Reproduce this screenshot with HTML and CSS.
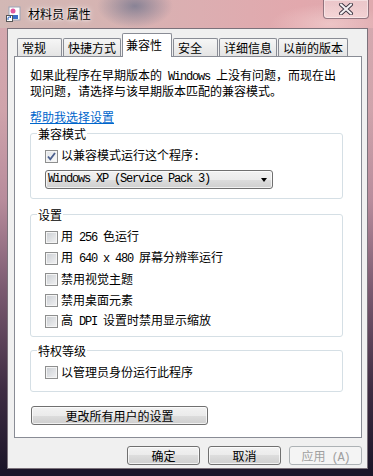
FILE: index.html
```html
<!DOCTYPE html>
<html lang="zh-CN">
<head>
  <meta charset="UTF-8">
  <meta name="viewport" content="width=device-width, initial-scale=1.0">
  <title>材料员 属性</title>
  <link rel="stylesheet" href="styles.css">
</head>
<body>
  <div class="window">
    <div class="titlebar">
      <svg class="app-icon" width="16" height="16" viewBox="0 0 16 16">
        <rect x="3" y="1" width="11" height="13" fill="#fff" stroke="#9aa3b5"/>
        <circle cx="7" cy="5" r="2.5" fill="#e05aa0"/>
        <path d="M6 9 h6 v4 h-6 z" fill="#3a6fc8"/>
        <rect x="0.5" y="9.5" width="6" height="6" fill="#fff" stroke="#555"/>
        <path d="M2 14 L2 12 Q2 11 3.5 11 L5 11 M4 10 L5 11 L4 12" fill="none" stroke="#1f5bc0" stroke-width="1"/>
      </svg>
      <span class="title">材料员 属性</span>
      <div class="close-btn">
        <svg width="16" height="12" viewBox="0 0 16 12">
          <path d="M3 1.5 L13 10.5 M13 1.5 L3 10.5" stroke="#3b3440" stroke-width="4" stroke-linecap="round"/>
          <path d="M3 1.5 L13 10.5 M13 1.5 L3 10.5" stroke="#f4f0f2" stroke-width="2.2" stroke-linecap="round"/>
        </svg>
      </div>
    </div>

    <div class="client">
      <div class="tabs">
        <div class="tab">常规</div>
        <div class="tab">快捷方式</div>
        <div class="tab active">兼容性</div>
        <div class="tab">安全</div>
        <div class="tab">详细信息</div>
        <div class="tab">以前的版本</div>
      </div>

      <div class="panel">
        <p class="intro">如果此程序在早期版本的<span class="sbc"> Windows </span>上没有问题，而现在出<br>现问题，请选择与该早期版本匹配的兼容模式。</p>
        <a class="help-link" href="#">帮助我选择设置</a>

        <fieldset class="group group-compat">
          <legend>兼容模式</legend>
          <label class="check-row">
            <span class="checkbox checked">
              <svg width="11" height="11" viewBox="0 0 11 11"><path d="M2 5.5 L4.3 8.3 L9 2" fill="none" stroke="#4b5f8e" stroke-width="1.8"/></svg>
            </span>
            <span class="check-text">以兼容模式运行这个程序<span class="sbc">:</span></span>
          </label>
          <div class="combo">
            <span class="sbc">Windows XP (Service Pack 3)</span>
            <span class="combo-arrow"></span>
          </div>
        </fieldset>

        <fieldset class="group group-settings">
          <legend>设置</legend>
          <label class="check-row"><span class="checkbox"></span><span class="check-text">用<span class="sbc"> 256 </span>色运行</span></label>
          <label class="check-row"><span class="checkbox"></span><span class="check-text">用<span class="sbc"> 640 x 480 </span>屏幕分辨率运行</span></label>
          <label class="check-row"><span class="checkbox"></span><span class="check-text">禁用视觉主题</span></label>
          <label class="check-row"><span class="checkbox"></span><span class="check-text">禁用桌面元素</span></label>
          <label class="check-row"><span class="checkbox"></span><span class="check-text">高<span class="sbc"> DPI </span>设置时禁用显示缩放</span></label>
        </fieldset>

        <fieldset class="group group-privilege">
          <legend>特权等级</legend>
          <label class="check-row"><span class="checkbox"></span><span class="check-text">以管理员身份运行此程序</span></label>
        </fieldset>

        <button class="btn btn-all-users">更改所有用户的设置</button>
      </div>

      <div class="actions">
        <button class="btn">确定</button>
        <button class="btn">取消</button>
        <button class="btn disabled">应用<span class="sbc"> (A)</span></button>
      </div>
    </div>
  </div>
</body>
</html>
```

FILE: styles.css
```css
body {
  margin: 0;
  font-family: "Noto Sans CJK SC", "Liberation Sans", sans-serif;
  font-size: 12px;
  color: #000;
  background: #1b1528;
}

.window {
  width: 373px;
  height: 476px;
  box-sizing: border-box;
  padding-bottom: 7px;
  background: linear-gradient(to bottom, #d6aab0 0, #cfa3ab 110px, #b88c9c 200px, #7a5a70 290px, #3e2c42 390px, #1c1629 470px);
  overflow: hidden;
}

/* title bar (aero glass) */
.titlebar {
  height: 28px;
  display: flex;
  align-items: center;
  padding-left: 6px;
  background:
    radial-gradient(ellipse 38px 22px at 135px 6px, rgba(110, 115, 140, 0.75), rgba(110, 115, 140, 0) 100%),
    radial-gradient(ellipse 60px 20px at 330px 24px, rgba(245, 215, 215, 0.6), rgba(245, 215, 215, 0) 100%),
    linear-gradient(90deg, #d2b8b5 0, #d5b4b2 90px, #dcaeb1 200px, #e2a8ad 300px, #dfa9ae 373px);
}

.app-icon {
  flex: none;
}

.title {
  margin-left: 6px;
  line-height: 16px;
  text-shadow: 0 0 6px #fff, 0 0 3px #fff;
}

.close-btn {
  align-self: flex-start;
  margin-left: auto;
  margin-right: 4px;
  width: 46px;
  height: 19px;
  box-sizing: border-box;
  border: 1px solid rgba(70, 45, 60, 0.55);
  border-top: none;
  border-radius: 0 0 4px 4px;
  background: linear-gradient(to bottom, rgba(255, 255, 255, 0.35), rgba(255, 235, 235, 0.55));
  box-shadow: inset 0 0 0 1px rgba(255, 255, 255, 0.4);
  display: flex;
  align-items: center;
  justify-content: center;
}

/* dialog client area */
.client {
  height: 441px;
  box-sizing: border-box;
  margin: 0 5px 0 7px;
  border: 1px solid rgba(45, 30, 45, 0.6);
  background: #f0f0f0;
  padding: 4px 5px 3px 6px;
}

.tabs {
  height: 23px;
  display: flex;
  align-items: flex-end;
  gap: 1px;
  padding-left: 3px;
}

.tab {
  min-width: 45px;
  height: 18px;
  box-sizing: border-box;
  padding: 0 4px;
  border: 1px solid #898c95;
  border-bottom: none;
  border-radius: 2px 2px 0 0;
  background: linear-gradient(to bottom, #f6f6f6, #e4e4e4);
  line-height: 17px;
  white-space: nowrap;
}

.tab.active {
  width: 50px;
  height: 24px;
  padding-left: 3px;
  margin-bottom: -1px;
  background: #fff;
  line-height: 21px;
  position: relative;
  z-index: 1;
}

.panel {
  height: 382px;
  box-sizing: border-box;
  border: 1px solid #898c95;
  background: #fff;
  padding: 11px 18px 0 15px;
}

.intro {
  margin: 0;
  line-height: 13px;
}

.sbc {
  font-family: "Liberation Mono", monospace;
  font-size: 12px;
  letter-spacing: -1.2px;
}

.help-link {
  display: block;
  width: max-content;
  margin-top: 13px;
  line-height: 13px;
  color: #0066cc;
  text-decoration: underline;
}

/* group boxes */
.group {
  margin: 0;
  border: 1px solid #d5dfe5;
  border-radius: 3px;
  padding: 8px 10px 9px 6px;
  min-width: 0;
}

.group legend {
  padding: 0 1px;
  line-height: 13px;
}

.group-compat {
  margin-top: 4px;
}

.group-settings {
  margin-top: 9px;
  padding-bottom: 7px;
  display: flex;
  flex-direction: column;
  gap: 5px;
}

.group-privilege {
  margin-top: 7px;
  padding-top: 7px;
  padding-bottom: 11px;
}

.check-row {
  display: flex;
  align-items: center;
  height: 16px;
  margin-left: 8px;
  gap: 3px;
}

.check-text {
  line-height: 16px;
  white-space: pre;
}

.checkbox {
  width: 13px;
  height: 13px;
  box-sizing: border-box;
  flex: none;
  border: 1px solid #8e8f8f;
  background: linear-gradient(135deg, #c9cdd2, #f2f2f3);
  box-shadow: inset 0 0 0 1px #f4f4f4;
  display: flex;
  align-items: center;
  justify-content: center;
}

.checkbox.checked {
  background: linear-gradient(135deg, #e1e4e8, #fbfbfb);
}

.combo {
  margin: 6px 0 0 8px;
  width: 228px;
  height: 19px;
  box-sizing: border-box;
  border: 1px solid #707070;
  border-radius: 3px;
  background: linear-gradient(to bottom, #f2f2f2 0, #ebebeb 50%, #dddddd 50%, #cfcfcf 100%);
  box-shadow: inset 0 0 0 1px rgba(255, 255, 255, 0.7);
  display: flex;
  align-items: center;
  padding: 0 5px 0 2px;
  line-height: 17px;
}

.combo-arrow {
  margin-left: auto;
  width: 0;
  height: 0;
  border-left: 3.5px solid transparent;
  border-right: 3.5px solid transparent;
  border-top: 4px solid #000;
}

/* buttons */
.btn {
  font-family: inherit;
  font-size: 12px;
  color: #000;
  height: 19px;
  box-sizing: border-box;
  padding: 0;
  border: 1px solid #707070;
  border-radius: 3px;
  background: linear-gradient(to bottom, #f2f2f2 0, #ebebeb 50%, #dddddd 50%, #cfcfcf 100%);
  box-shadow: inset 0 0 0 1px rgba(255, 255, 255, 0.7);
  line-height: 17px;
}

.btn-all-users {
  display: block;
  margin: 14px 0 0 1px;
  width: 177px;
}

.actions {
  margin-top: 8px;
  display: flex;
  justify-content: flex-end;
  gap: 8px;
}

.actions .btn {
  width: 73px;
}

.btn.disabled {
  color: #a0a0a0;
  border-color: #adb2b5;
  background: #f4f4f4;
  box-shadow: none;
}
```
